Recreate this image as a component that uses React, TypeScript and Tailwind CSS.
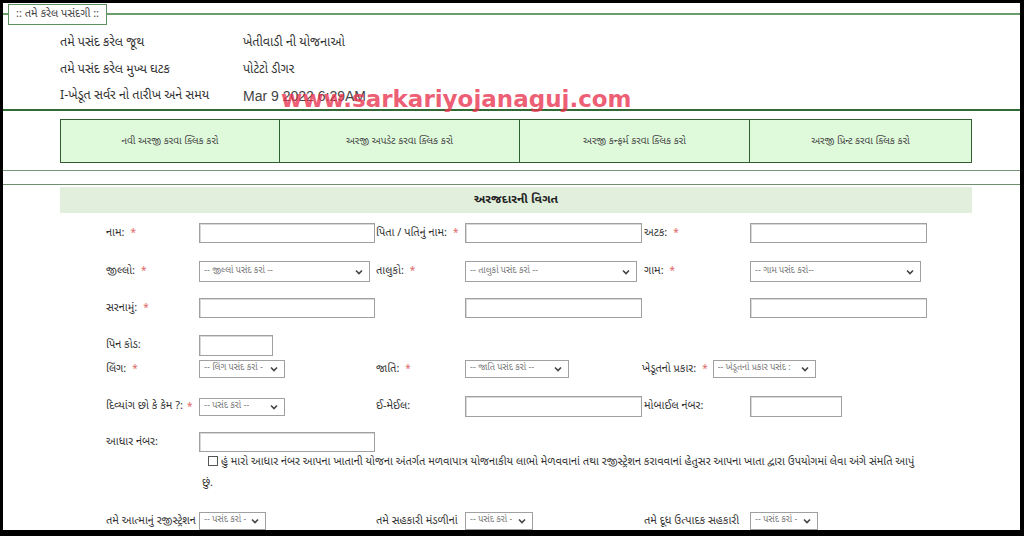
import { ReactNode } from "react";

const guj = "font-['Noto_Sans_Gujarati','Noto_Sans','DejaVu_Sans',sans-serif]";

const Star = () => <span className="ml-[6px] text-[10px] text-[#e06666]">*</span>;

const Label = ({ children, req }: { children: ReactNode; req?: boolean }) => (
  <div className={`flex items-center whitespace-nowrap text-[11px] text-[#333] ${guj}`}>
    {children}
    {req && <Star />}
  </div>
);

const Input = ({ w }: { w: string }) => (
  <div className={`h-full ${w} border border-[#a0a0a0] bg-white shadow-[inset_1px_1px_0_#d8d8d8]`} />
);

const Select = ({ w, text }: { w: string; text: string }) => (
  <div
    className={`flex h-full ${w} items-center justify-between border border-[#a0a0a0] bg-white pl-[4px] pr-[6px] text-[9px] text-[#777] ${guj}`}
  >
    <span className="truncate">{text}</span>
    <svg width="8" height="6" viewBox="0 0 8 6" className="shrink-0">
      <path d="M1 1.5 L4 4.5 L7 1.5" fill="none" stroke="#444" strokeWidth="1.6" />
    </svg>
  </div>
);

const menu = [
  { label: "નવી અરજી કરવા ક્લિક કરો", w: "w-[218px]" },
  { label: "અરજી અપડેટ કરવા ક્લિક કરો", w: "w-[240px]" },
  { label: "અરજી કન્ફર્મ કરવા ક્લિક કરો", w: "w-[230px]" },
  { label: "અરજી પ્રિન્ટ કરવા ક્લિક કરો", w: "flex-1" },
];

const grid = "grid grid-cols-[93px_177px_89px_179px_106px_auto] ml-[103px]";

export default function App() {
  return (
    <div className="h-[536px] w-[1024px] overflow-hidden bg-black pb-[6px] pl-[3px] pr-[4px] pt-[3px]">
      <div className="relative h-full w-full overflow-hidden bg-white">
        {/* fieldset legend */}
        <div className="flex h-[22px] items-center">
          <div className="h-[2px] w-[5px] bg-[#6a9e6a]" />
          <div className={`flex h-[21px] items-center border border-[#5e8f5e] bg-white px-[7px] text-[11px] text-[#444] ${guj}`}>
            :: તમે કરેલ પસંદગી ::
          </div>
          <div className="h-[2px] flex-1 bg-[#6a9e6a]" />
        </div>

        <div className={`ml-[57px] mt-[5px] flex flex-col text-[12.5px] text-[#333] ${guj}`}>
          <div className="flex h-[27px] items-center">
            <div className="w-[183px]">તમે પસંદ કરેલ જૂથ</div>
            <div>ખેતીવાડી ની યોજનાઓ</div>
          </div>
          <div className="flex h-[27px] items-center">
            <div className="w-[183px]">તમે પસંદ કરેલ મુખ્ય ઘટક</div>
            <div>પોટેટો ડીગર</div>
          </div>
          <div className="flex h-[25px] items-start pt-[3px]">
            <div className="w-[183px]">I-ખેડૂત સર્વર નો તારીખ અને સમય</div>
            <div className="font-['Liberation_Sans',sans-serif] text-[14px] leading-[18px] text-[#444]">Mar 9 2022 6:29AM</div>
          </div>
        </div>

        <div className="h-[2px] bg-[#2f6b33]" />

        {/* action buttons */}
        <div className="ml-[57px] mr-[48px] mt-[8px] flex h-[44px] border border-[#2f5f2f] bg-[#dffadb]">
          {menu.map((m, i) => (
            <div
              key={m.label}
              className={`flex ${m.w} items-center justify-center text-[10px] text-[#444] ${guj} ${i > 0 ? "border-l border-[#2f5f2f]" : ""}`}
            >
              {m.label}
            </div>
          ))}
        </div>

        <div className="mt-[7px] h-px bg-[#7a967a]" />
        <div className="mt-[13px] h-px bg-[#6f8f6f]" />

        {/* section header */}
        <div className={`ml-[57px] mr-[48px] mt-[2px] flex h-[26px] items-center justify-center bg-[#e1efdc] text-[12px] font-bold text-[#222] ${guj}`}>
          અરજદારની વિગત
        </div>

        {/* form */}
        <div className="flex flex-col">
          <div className={`${grid} mt-[10px] h-[20px]`}>
            <Label req>નામ:</Label>
            <Input w="w-[176px]" />
            <Label req>પિતા / પતિનું નામ:</Label>
            <Input w="w-[177px]" />
            <Label req>અટક:</Label>
            <Input w="w-[177px]" />
          </div>

          <div className={`${grid} mt-[18px] h-[21px]`}>
            <Label req>જીલ્લો:</Label>
            <Select w="w-[171px]" text="-- જીલ્લો પસંદ કરો --" />
            <Label req>તાલુકો:</Label>
            <Select w="w-[172px]" text="-- તાલુકો પસંદ કરો --" />
            <Label req>ગામ:</Label>
            <Select w="w-[171px]" text="-- ગામ પસંદ કરો--" />
          </div>

          <div className={`${grid} mt-[16px] h-[20px]`}>
            <Label req>સરનામું:</Label>
            <Input w="w-[176px]" />
            <div />
            <Input w="w-[177px]" />
            <div />
            <Input w="w-[177px]" />
          </div>

          <div className={`${grid} mt-[17px] h-[21px]`}>
            <Label>પિન કોડ:</Label>
            <Input w="w-[74px]" />
          </div>

          <div className={`${grid} mt-[4px] h-[18px]`}>
            <Label req>લિંગ:</Label>
            <Select w="w-[86px]" text="-- લિંગ પસંદ કરો -" />
            <Label req>જાતિ:</Label>
            <Select w="w-[104px]" text="-- જાતિ પસંદ કરો --" />
            <div className="col-span-2 -ml-[2px] flex h-full items-center gap-[5px]">
              <Label req>ખેડૂતનો પ્રકાર:</Label>
              <Select w="w-[103px]" text="-- ખેડૂતનો પ્રકાર પસંદ :" />
            </div>
          </div>

          <div className={`${grid} mt-[18px] h-[21px]`}>
            <div className="flex items-center">
              <Label>દિવ્યાંગ છો કે કેમ ?:</Label>
              <span className="ml-[4px] text-[10px] text-[#e06666]">*</span>
            </div>
            <div className="flex h-[18px] items-center self-center">
              <Select w="w-[86px]" text="-- પસંદ કરો --" />
            </div>
            <Label>ઈ-મેઈલ:</Label>
            <Input w="w-[177px]" />
            <Label>મોબાઈલ નંબર:</Label>
            <Input w="w-[92px]" />
          </div>

          <div className={`${grid} mt-[15px] h-[20px]`}>
            <Label>આધાર નંબર:</Label>
            <Input w="w-[176px]" />
          </div>

          <div className={`ml-[199px] mr-[96px] text-[11px] leading-[21px] text-[#333] ${guj}`}>
            <span className="mr-[3px] ml-[6px] inline-block h-[10px] w-[10px] border border-[#555] bg-white align-[-1px]" />
            હું મારો આધાર નંબર આપના ખાતાની યોજના અંતર્ગત મળવાપાત્ર યોજનાકીય લાભો મેળવવાનાં તથા રજીસ્ટ્રેશન કરાવવાનાં હેતુસર આપના ખાતા દ્વારા ઉપયોગમાં લેવા અંગે સંમતિ આપું છું.
          </div>

          <div className={`${grid} mt-[18px] h-[18px]`}>
            <Label>તમે આત્માનું રજીસ્ટ્રેશન</Label>
            <Select w="w-[67px]" text="-- પસંદ કરો -" />
            <Label>તમે સહકારી મંડળીનાં</Label>
            <Select w="w-[68px]" text="-- પસંદ કરો -" />
            <Label>તમે દૂધ ઉત્પાદક સહકારી</Label>
            <Select w="w-[68px]" text="-- પસંદ કરો -" />
          </div>
        </div>

        {/* watermark */}
        <div className="pointer-events-none absolute left-[278px] top-[79px] font-['DejaVu_Sans',sans-serif] text-[23px] font-bold text-[#e8334f]/80">
          www.sarkariyojanaguj.com
        </div>
      </div>
    </div>
  );
}
